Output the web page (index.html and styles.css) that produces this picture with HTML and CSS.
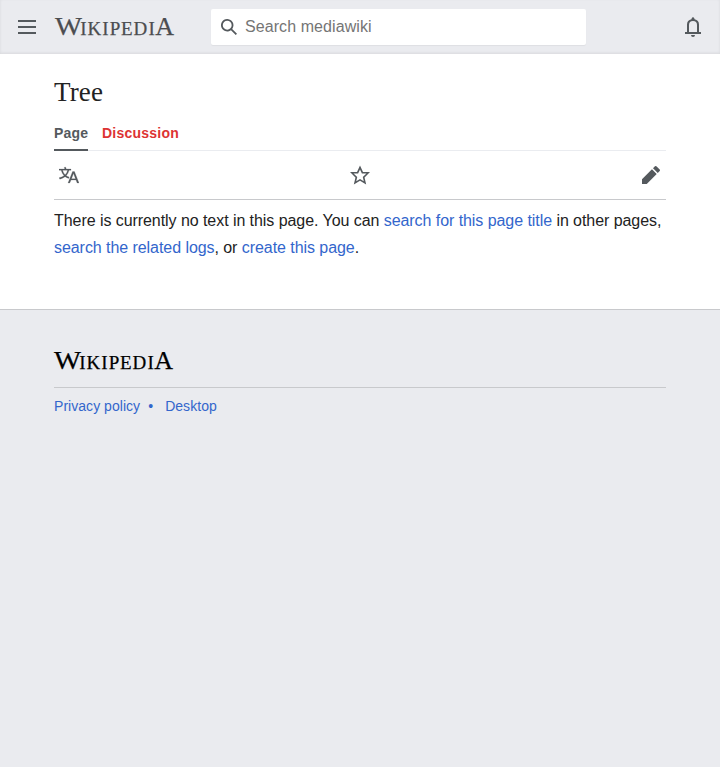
FILE: index.html
```html
<!DOCTYPE html>
<html lang="en">
<head>
<meta charset="utf-8">
<title>Tree</title>
<link rel="stylesheet" href="styles.css">
</head>
<body>
<header class="header">
  <svg class="menu" width="18" height="14" viewBox="0 0 18 14"><path d="M0 0h18v2H0zM0 6h18v2H0zM0 12h18v2H0z"/></svg>
  <svg class="wordmark" width="120" height="20" viewBox="0 0 120 20" role="img" aria-label="Wikipedia"><text class="cap" y="18" x="0" textLength="27" lengthAdjust="spacingAndGlyphs">W</text><text class="small" y="18" x="25.3 32.6 47.3 54.8 66 78.6 93.6">IKIPEDI</text><text class="cap" y="18" x="100.2">A</text></svg>
  <div class="search">
    <svg width="16" height="16" viewBox="1 1 18 18"><path d="M12.2 13.6a7 7 0 1 1 1.4-1.4l5.4 5.4-1.4 1.4zM3 8a5 5 0 1 0 10 0A5 5 0 0 0 3 8z"/></svg>
    <span>Search mediawiki</span>
  </div>
  <svg class="bell" width="20" height="20" viewBox="0 0 20 20"><path fill-rule="evenodd" d="M11.600 2.200Q11.500 .9 10 0Q8.500 .9 8.400 2.200A5.500 5.500 0 0 0 4 7.500V15H2v2h16v-2h-2V7.500A5.500 5.500 0 0 0 11.600 2.200zM14 15H6V8a4 4 0 0 1 8 0zM8 18h4a2 2 0 0 1-4 0z"/></svg>
</header>
<main class="content">
  <h1>Tree</h1>
  <nav class="tabs"><a class="tab active">Page</a><a class="tab missing">Discussion</a></nav>
  <div class="actions">
    <svg class="language" width="20" height="20" viewBox="0 0 20 20"><path d="M20 18h-1.440a.61.61 0 0 1-.4-.12.81.81 0 0 1-.23-.31L17 15h-5l-1 2.540a.77.77 0 0 1-.22.3.59.59 0 0 1-.4.140H9l4.550-11.470h1.890zm-3.530-4.310L14.890 9.500a11.620 11.620 0 0 1-.39-1.240q-.09.37-.19.690l-.19.560-1.580 4.190zm-6.300-1.580a13.430 13.430 0 0 1-2.910-1.410 11.460 11.460 0 0 0 2.810-5.370H12V4H7.310a4 4 0 0 0-.2-.56C6.870 2.790 6.600 2 6.600 2l-1.470.5s.4.890.6 1.500H0v1.330h2.150A11.230 11.230 0 0 0 5 10.700a17.190 17.190 0 0 1-5 2.100q.56.820.87 1.380a23.280 23.280 0 0 0 5.220-2.510 15.640 15.640 0 0 0 3.560 1.770zM3.630 5.330h4.910a8.110 8.110 0 0 1-2.450 4.450 9.110 9.110 0 0 1-2.460-4.450z"/></svg>
    <svg width="20" height="20" viewBox="0 0 20 20"><path fill-rule="evenodd" d="M20 7h-7L10 .5 7 7H0l5.460 5.470-1.640 7 6.180-3.700 6.180 3.730-1.630-7zm-10 6.900-3.760 2.270 1-4.280L3.500 8.500h4.610L10 4.600l1.900 3.900h4.600l-3.730 3.400 1 4.280z"/></svg>
    <svg width="20" height="20" viewBox="0 0 20 20"><path d="M16.770 8l1.940-2a1 1 0 0 0 0-1.410l-3.340-3.300a1 1 0 0 0-1.410 0L12 3.230zM1 14.250V19h4.750l9.960-9.960-4.750-4.750z"/></svg>
  </div>
  <p>There is currently no text in this page. You can <a>search for this page title</a> in other pages, <a>search the related logs</a>, or <a>create this page</a>.</p>
</main>
<footer class="footer">
  <div class="brand"><svg class="wordmark" width="120" height="20" viewBox="0 0 120 20" role="img" aria-label="Wikipedia"><text class="cap" y="18" x="0" textLength="27" lengthAdjust="spacingAndGlyphs">W</text><text class="small" y="18" x="25.3 32.6 47.3 54.8 66 78.6 93.6">IKIPEDI</text><text class="cap" y="18" x="100.2">A</text></svg></div>
  <div class="links"><a>Privacy policy</a><span class="dot">•</span><a>Desktop</a></div>
</footer>
</body>
</html>
```
FILE: styles.css
```css
* { box-sizing: border-box; }
body {
  margin: 0;
  height: 768px;
  padding-bottom: 1px;
  display: flex;
  flex-direction: column;
  background: #fff;
  color: #222;
  font-family: "Liberation Sans", Arial, sans-serif;
  overflow: hidden;
}
svg { display: block; fill: #54595d; flex: none; }
a { color: #36c; }
.header {
  height: 54px;
  flex: none;
  display: flex;
  align-items: center;
  padding: 0 17px 0 18px;
  background: #eaebef;
  box-shadow: inset 0 -1px 3px rgba(0, 0, 0, .08);
}
.header .wordmark { margin-left: 19px; fill: #4c4d50; stroke: #4c4d50; }
.wordmark { overflow: visible; stroke-width: .25px; }
.wordmark text { font-family: "Liberation Serif", serif; }
.cap { font-size: 26px; }
.small { font-size: 19px; }
.search {
  width: 375px;
  height: 36px;
  margin-left: 36px;
  padding: 0 10px;
  display: flex;
  align-items: center;
  gap: 8px;
  background: #fff;
  border-radius: 2px;
  box-shadow: 0 1px 1px rgba(0, 0, 0, .05);
  color: #757575;
  font-size: 16px;
  letter-spacing: .08px;
}
.bell { margin-left: auto; }
.content { height: 255px; flex: none; padding: 0 54px; }
h1 {
  margin: 0;
  padding-top: 21px;
  font: 27px/35px "Liberation Serif", serif;
  letter-spacing: .15px;
}
.tabs {
  display: flex;
  gap: 14px;
  height: 41px;
  border-bottom: 1px solid #eaecf0;
  font-size: 14px;
  font-weight: bold;
  letter-spacing: .23px;
}
.tab { height: 41px; padding-top: 15px; line-height: 16px; }
.active { width: 34px; color: #54595d; border-bottom: 2px solid #54595d; }
.missing { color: #d33; }
.actions {
  height: 49px;
  padding: 0 5px;
  display: flex;
  justify-content: space-between;
  align-items: center;
  border-bottom: 1px solid #c8c9cc;
}
.language { stroke: #54595d; stroke-width: .2px; }
p { margin: 7px -4px 0 0; font-size: 16px; line-height: 27px; letter-spacing: -.06px; }
.footer {
  flex: 1;
  padding: 41px 54px 0;
  background: #eaebef;
  border-top: 1px solid #c8c9cc;
}
.brand { height: 37px; border-bottom: 1px solid #c8c9cc; }
.brand svg { fill: #000; stroke: #000; }
.links { display: flex; margin-top: 10px; font-size: 14px; line-height: 17px; letter-spacing: .04px; color: #36c; }
.dot { width: 17px; margin-left: 8px; }
```
